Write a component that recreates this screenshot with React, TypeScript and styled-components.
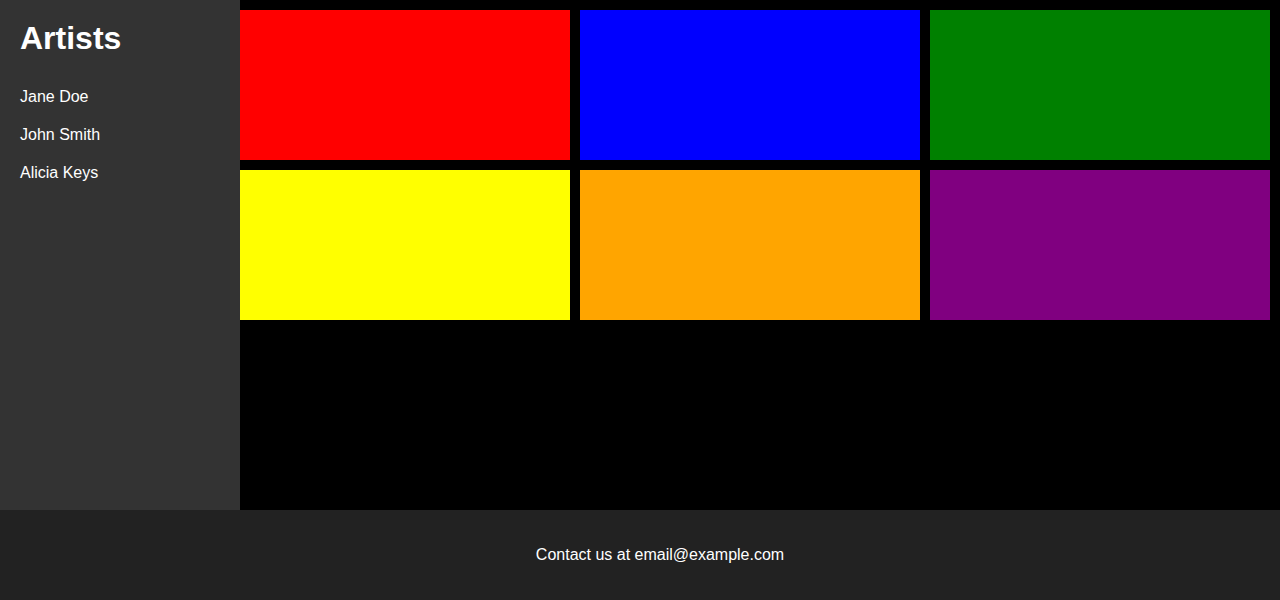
import React from "react";
import styled, { createGlobalStyle } from "styled-components";

const Global = createGlobalStyle`
  html, body { margin: 0; padding: 0; background: #000; }
  body { font-family: "Liberation Sans", Arial, sans-serif; color: #fff; }
  * { box-sizing: border-box; }
`;

const Page = styled.div`
  display: flex;
  flex-direction: column;
  height: 600px;
`;

const Body = styled.div`
  flex: 1;
  display: flex;
  min-height: 0;
`;

const Sidebar = styled.aside`
  width: 240px;
  flex-shrink: 0;
  background: #333;
  padding: 20px;
`;

const Title = styled.h1`
  margin: 0 0 21px;
  font-size: 32px;
  font-weight: 700;
  line-height: 37px;
`;

const List = styled.ul`
  list-style: none;
  margin: 0;
  padding: 0;
`;

const Item = styled.li`
  font-size: 16px;
  line-height: 18px;
  padding: 10px 0;
`;

const Main = styled.main`
  flex: 1;
  background: #000;
  padding: 10px 10px 10px 0;
`;

const Grid = styled.div`
  display: grid;
  grid-template-columns: 330px 1fr 1fr;
  grid-auto-rows: 150px;
  gap: 10px;
`;

const Tile = styled.div<{ $color: string }>`
  background: ${(p) => p.$color};
`;

const Footer = styled.footer`
  height: 90px;
  background: #222;
  display: flex;
  align-items: center;
  justify-content: center;
  font-size: 16px;
  padding: 0 0 0 40px;
`;

const artists = ["Jane Doe", "John Smith", "Alicia Keys"];
const colors = ["red", "blue", "green", "yellow", "orange", "purple"];

export default function App() {
  return (
    <>
      <Global />
      <Page>
        <Body>
          <Sidebar>
            <Title>Artists</Title>
            <List>
              {artists.map((a) => (
                <Item key={a}>{a}</Item>
              ))}
            </List>
          </Sidebar>
          <Main>
            <Grid>
              {colors.map((c) => (
                <Tile key={c} $color={c} />
              ))}
            </Grid>
          </Main>
        </Body>
        <Footer>Contact us at email@example.com</Footer>
      </Page>
    </>
  );
}
